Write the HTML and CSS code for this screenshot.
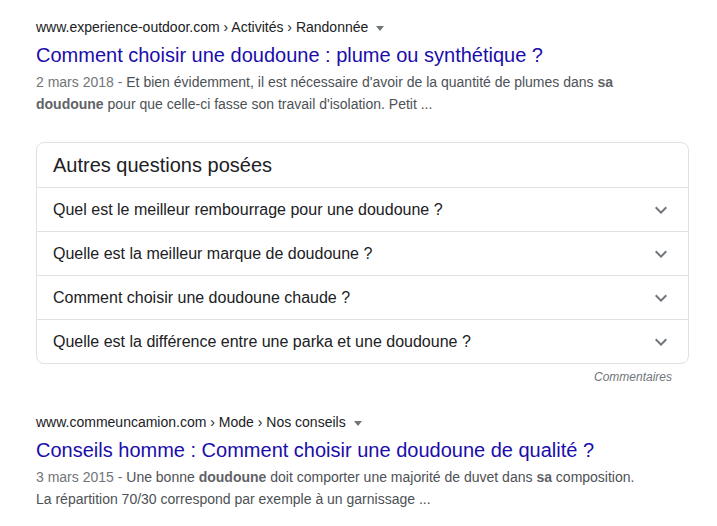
FILE: index.html
```html
<!DOCTYPE html>
<html lang="fr">
<head>
    <meta charset="UTF-8">
    <meta name="viewport" content="width=device-width, initial-scale=1.0">
    <title>doudoune - Recherche</title>
    <link rel="stylesheet" href="styles.css">
</head>
<body>
    <div class="results">
        <!-- Result 1 -->
        <div class="result">
            <div class="cite">www.experience-outdoor.com › Activités › Randonnée <span class="drop"></span></div>
            <h3 class="title">Comment choisir une doudoune : plume ou synthétique ?</h3>
            <div class="snippet">
                <div><span class="date">2 mars 2018 - </span>Et bien évidemment, il est nécessaire d'avoir de la quantité de plumes dans <b>sa</b></div>
                <div><b>doudoune</b> pour que celle-ci fasse son travail d'isolation. Petit ...</div>
            </div>
        </div>

        <!-- People also ask -->
        <div class="paa">
            <div class="paa-head">Autres questions posées</div>
            <div class="paa-row">
                <span>Quel est le meilleur rembourrage pour une doudoune ?</span>
                <svg class="chev" viewBox="0 0 24 24"><path d="M16.59 8.59L12 13.17 7.41 8.59 6 10l6 6 6-6z"/></svg>
            </div>
            <div class="paa-row">
                <span>Quelle est la meilleur marque de doudoune ?</span>
                <svg class="chev" viewBox="0 0 24 24"><path d="M16.59 8.59L12 13.17 7.41 8.59 6 10l6 6 6-6z"/></svg>
            </div>
            <div class="paa-row">
                <span>Comment choisir une doudoune chaude ?</span>
                <svg class="chev" viewBox="0 0 24 24"><path d="M16.59 8.59L12 13.17 7.41 8.59 6 10l6 6 6-6z"/></svg>
            </div>
            <div class="paa-row">
                <span>Quelle est la différence entre une parka et une doudoune ?</span>
                <svg class="chev" viewBox="0 0 24 24"><path d="M16.59 8.59L12 13.17 7.41 8.59 6 10l6 6 6-6z"/></svg>
            </div>
        </div>
        <div class="feedback">Commentaires</div>

        <!-- Result 2 -->
        <div class="result">
            <div class="cite">www.commeuncamion.com › Mode › Nos conseils <span class="drop"></span></div>
            <h3 class="title">Conseils homme : Comment choisir une doudoune de qualité ?</h3>
            <div class="snippet">
                <div><span class="date">3 mars 2015 - </span>Une bonne <b>doudoune</b> doit comporter une majorité de duvet dans <b>sa</b> composition.</div>
                <div>La répartition 70/30 correspond par exemple à un garnissage ...</div>
            </div>
        </div>
    </div>
</body>
</html>
```

FILE: styles.css
```css
body {
    margin: 0;
    padding: 0;
    background-color: #fff;
    font-family: 'Liberation Sans', Arial, sans-serif;
    color: #202124;
}

.results {
    width: 653px;
    margin-left: 36px;
    padding-top: 17px;
}

.result {
    width: 620px;
}

.cite {
    font-size: 14px;
    line-height: 20px;
    color: #202124;
}

/* small dropdown arrow after the url */
.drop {
    display: inline-block;
    margin-left: 4px;
    vertical-align: middle;
    border-style: solid;
    border-width: 5px 4px 0 4px;
    border-color: #70757a transparent transparent transparent;
}

.title {
    margin: 5px 0 0 0;
    font-size: 20px;
    font-weight: normal;
    line-height: 26px;
    color: #1a0dab;
}

.snippet {
    margin-top: 3px;
    font-size: 14px;
    line-height: 22px;
    color: #4d5156;
    white-space: nowrap;
}

.snippet b {
    color: #5f6368;
}

.date {
    color: #70757a;
}

.paa {
    margin-top: 27px;
    border: 1px solid #dfe1e5;
    border-radius: 8px;
}

.paa-head {
    padding: 0 16px;
    height: 44px;
    line-height: 44px;
    font-size: 20px;
    color: #202124;
    border-bottom: 1px solid #dfe1e5;
}

.paa-row {
    display: flex;
    align-items: center;
    justify-content: space-between;
    height: 43px;
    padding: 0 15px 0 16px;
    font-size: 16px;
    color: #202124;
    border-bottom: 1px solid #dfe1e5;
}

.paa-row:last-child {
    border-bottom: none;
}

.chev {
    width: 24px;
    height: 24px;
    fill: #70757a;
}

.feedback {
    margin-top: 5px;
    padding-right: 17px;
    text-align: right;
    font-size: 12px;
    font-style: italic;
    line-height: 16px;
    color: #70757a;
}

.feedback + .result {
    margin-top: 27px;
}
```
